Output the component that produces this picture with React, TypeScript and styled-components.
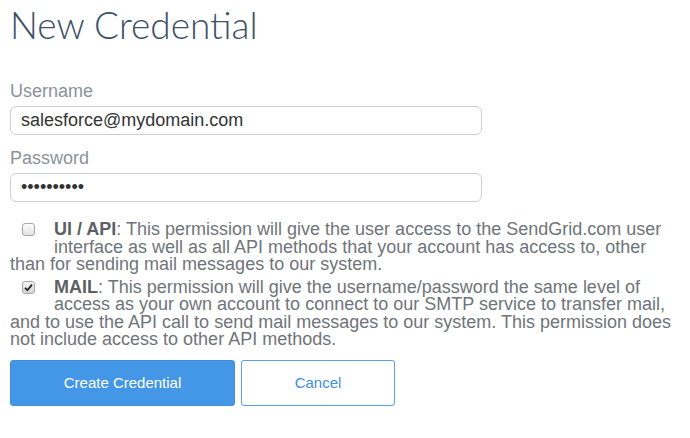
import * as React from "react"
import styled, { createGlobalStyle } from "styled-components"

const GlobalStyle = createGlobalStyle`
  html, body {
    margin: 0;
    padding: 0;
    background: #ffffff;
  }
  body {
    font-family: "Liberation Sans", Arial, sans-serif;
  }
`

const Page = styled.div`
  padding: 3px 10px 0 10px;
  width: 670px;
`

const Title = styled.h1`
  font-family: "Lato", "Liberation Sans", sans-serif;
  font-weight: 300;
  font-size: 37px;
  line-height: 44px;
  color: #3d5068;
  margin: 0 0 33px 0;
`

const Field = styled.div`
  display: flex;
  flex-direction: column;
  margin-bottom: 12px;
`

const Label = styled.label`
  font-size: 18px;
  line-height: 22px;
  color: #8b9299;
  margin-bottom: 4px;
`

const Input = styled.input`
  box-sizing: border-box;
  width: 472px;
  height: 29px;
  border: 1px solid #cfcfcf;
  border-radius: 6px;
  padding: 0 10px;
  font-family: "Liberation Sans", Arial, sans-serif;
  font-size: 18px;
  color: #333;
  outline: none;
`

const Permissions = styled.div`
  display: flex;
  flex-direction: column;
  gap: 5px;
  margin-top: 19px;
`

const Permission = styled.div`
  font-size: 18px;
  line-height: 17.5px;
  color: #6f747a;
`

const Box = styled.span<{ checked: boolean }>`
  float: left;
  width: 13px;
  height: 13px;
  margin: 2px 19px 14px 12px;
  box-sizing: border-box;
  border: 1px solid #a7a7a7;
  border-radius: 3px;
  background: ${p => (p.checked ? "linear-gradient(#f4f4f4, #d6d6d6)" : "linear-gradient(#fbfbfb, #e2e2e2)")};
  display: flex;
  align-items: center;
  justify-content: center;
`

const Strong = styled.b`
  font-weight: 700;
  color: #5d6166;
`

const Actions = styled.div`
  display: flex;
  gap: 6px;
  margin-top: 11px;
`

const Button = styled.button<{ primary?: boolean }>`
  height: 46px;
  width: ${p => (p.primary ? "225px" : "154px")};
  box-sizing: border-box;
  border-radius: 3px;
  border: 1px solid ${p => (p.primary ? "#3f8fe0" : "#5aa0e6")};
  background: ${p => (p.primary ? "#4497e6" : "#ffffff")};
  color: ${p => (p.primary ? "#ffffff" : "#3f8fde")};
  font-family: "Liberation Sans", Arial, sans-serif;
  font-size: 15px;
`

const Check = () => (
  <svg width="9" height="9" viewBox="0 0 9 9">
    <path d="M1 4.8 L3.4 7.2 L8 1.6" fill="none" stroke="#222" strokeWidth="1.8" />
  </svg>
)

export default function App() {
  return (
    <>
      <GlobalStyle />
      <Page>
        <Title>New Credential</Title>
        <Field>
          <Label>Username</Label>
          <Input defaultValue="salesforce@mydomain.com" />
        </Field>
        <Field>
          <Label>Password</Label>
          <Input type="password" defaultValue="abcdefghij" />
        </Field>
        <Permissions>
          <Permission>
            <Box checked={false} />
            <Strong>UI / API</Strong>: This permission will give the user access to the SendGrid.com user
            interface as well as all API methods that your account has access to, other than for sending
            mail messages to our system.
          </Permission>
          <Permission>
            <Box checked>
              <Check />
            </Box>
            <Strong>MAIL</Strong>: This permission will give the username/password the same level of
            access as your own account to connect to our SMTP service to transfer mail, and to use the API
            call to send mail messages to our system. This permission does not include access to other API
            methods.
          </Permission>
        </Permissions>
        <Actions>
          <Button primary>Create Credential</Button>
          <Button>Cancel</Button>
        </Actions>
      </Page>
    </>
  )
}
